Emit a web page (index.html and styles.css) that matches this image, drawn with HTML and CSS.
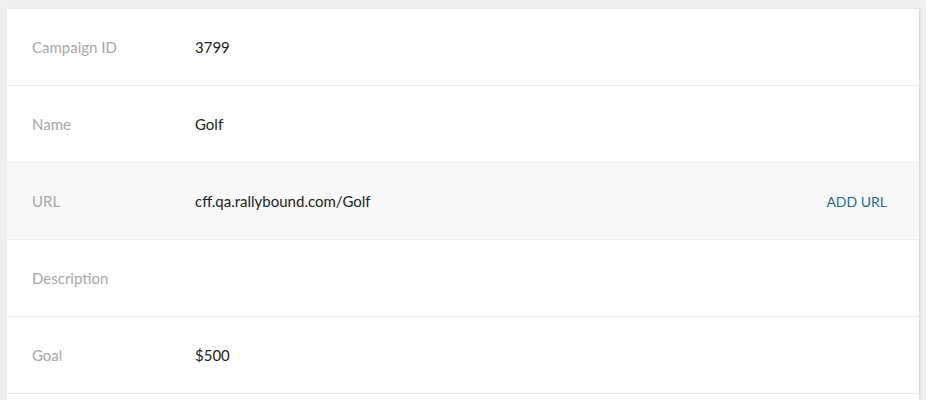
FILE: index.html
```html
<!DOCTYPE html>
<html lang="en">
<head>
    <meta charset="UTF-8">
    <meta name="viewport" content="width=device-width, initial-scale=1.0">
    <title>Campaign Details</title>
    <link rel="stylesheet" href="styles.css">
</head>
<body>

<div class="card">
    <div class="row">
        <span class="label">Campaign ID</span>
        <span class="value">3799</span>
    </div>
    <div class="row">
        <span class="label">Name</span>
        <span class="value">Golf</span>
    </div>
    <div class="row row-hover">
        <span class="label">URL</span>
        <span class="value">cff.qa.rallybound.com/Golf</span>
        <a class="action" href="#">ADD URL</a>
    </div>
    <div class="row">
        <span class="label">Description</span>
        <span class="value"></span>
    </div>
    <div class="row">
        <span class="label">Goal</span>
        <span class="value">$500</span>
    </div>
</div>

</body>
</html>
```

FILE: styles.css
```css
body {
    font-family: 'Lato', sans-serif;
    background-color: #efefef;
    margin: 0;
    padding: 9px 7px 0 7px;
}
.card {
    background-color: #fff;
    width: 912px;
    padding-bottom: 40px;
    box-shadow: 1px 0 2px rgba(0, 0, 0, 0.12);
}
.row {
    display: flex;
    align-items: center;
    height: 76px;
    padding: 0 32px 0 25px;
    border-bottom: 1px solid #ececec;
    font-size: 15px;
}
.row-hover {
    background-color: #f8f8f8;
}
.label {
    width: 163px;
    color: #a8a8a8;
}
.value {
    flex: 1;
    color: #222;
}
.action {
    color: #1d6c8b;
    font-size: 14px;
    text-decoration: none;
}
```
